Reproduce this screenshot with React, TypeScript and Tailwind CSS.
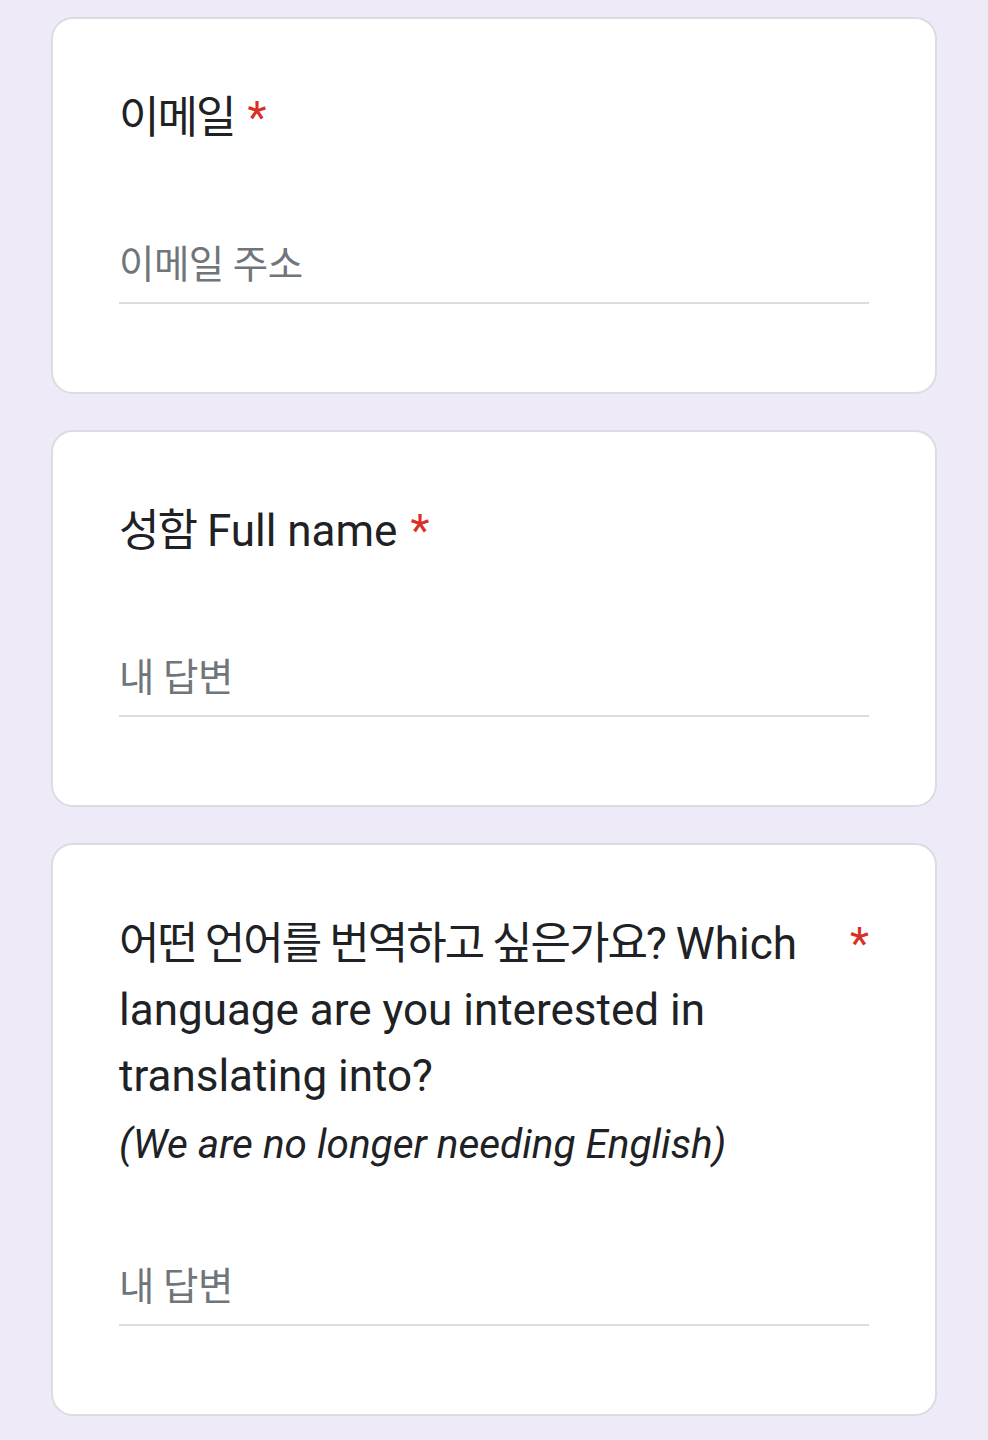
import React from 'react';

const font = { fontFamily: 'Roboto, "Noto Sans CJK KR", sans-serif' };

// Hangul in the screenshot runs a little narrower than Noto CJK, so tighten it a bit
const Ko = ({ children, loose }: { children: React.ReactNode; loose?: boolean }) => (
  <span className={loose ? 'tracking-[-0.5px]' : 'tracking-[-2px]'}>{children}</span>
);

const Question = ({
  title,
  description,
  placeholder,
}: {
  title: React.ReactNode;
  description?: React.ReactNode;
  placeholder: string;
}) => {
  return (
    <div className="rounded-[22px] border-2 border-[#dadce0] bg-white px-[66px] pt-[66px] pb-[88px]">
      <div className="flex text-[44px] leading-[66px] text-[#202124]">
        <div>{title}</div>
        <span className="shrink-0 pl-[13px] text-[#d93025]">*</span>
      </div>
      {description && (
        <div className="mt-[5px] text-[40.5px] leading-[60px] italic text-[#202124]">
          {description}
        </div>
      )}
      <div
        className={
          description
            ? 'mt-[76px] flex h-[76px] items-center border-b-2 border-[#dadce0] text-[38.5px] leading-none text-[#70757a]'
            : 'mt-[77px] flex h-[76px] items-center border-b-2 border-[#dadce0] text-[38.5px] leading-none text-[#70757a]'
        }
      >
        <Ko loose>{placeholder}</Ko>
      </div>
    </div>
  );
};

export default function App() {
  return (
    <div className="min-h-[1440px] bg-[#eeeaf7] px-[51px] pt-[17px] pb-[25px]" style={font}>
      <div className="flex flex-col gap-[36px]">
        <Question title={<Ko>이메일</Ko>} placeholder="이메일 주소" />
        <Question
          title={
            <>
              <Ko>성함</Ko> Full name
            </>
          }
          placeholder="내 답변"
        />
        <Question
          title={
            <>
              <Ko>어떤 언어를 번역하고 싶은가요?</Ko> Which language are you interested in
              translating into?
            </>
          }
          description="(We are no longer needing English)"
          placeholder="내 답변"
        />
      </div>
    </div>
  );
}
